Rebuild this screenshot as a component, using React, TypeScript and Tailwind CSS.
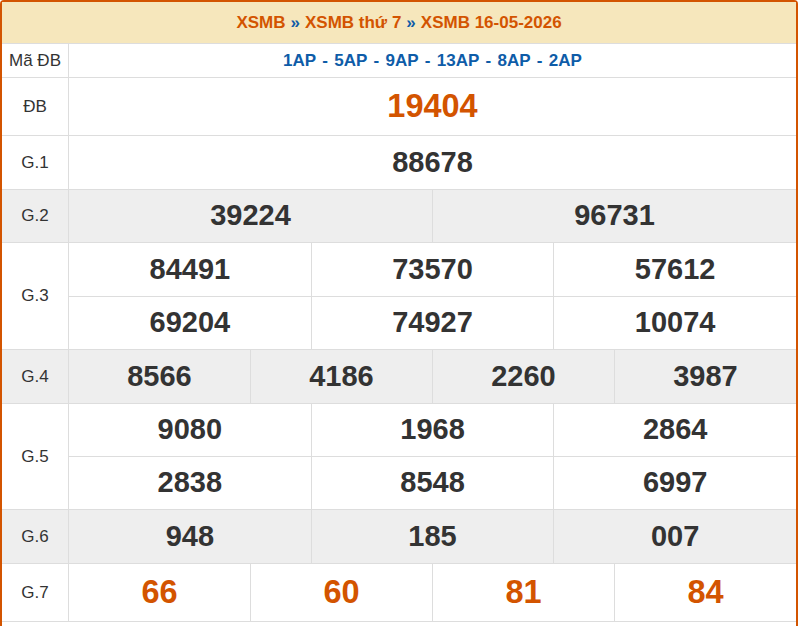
import React from "react";

type Group = {
  label: string;
  rows: string[][];
  heights: number[];
  gray?: boolean;
  orange?: boolean;
  big?: boolean;
};

const groups: Group[] = [
  { label: "ĐB", rows: [["19404"]], heights: [58], orange: true, big: true },
  { label: "G.1", rows: [["88678"]], heights: [54] },
  { label: "G.2", rows: [["39224", "96731"]], heights: [53], gray: true },
  {
    label: "G.3",
    rows: [
      ["84491", "73570", "57612"],
      ["69204", "74927", "10074"],
    ],
    heights: [54, 53],
  },
  { label: "G.4", rows: [["8566", "4186", "2260", "3987"]], heights: [54], gray: true },
  {
    label: "G.5",
    rows: [
      ["9080", "1968", "2864"],
      ["2838", "8548", "6997"],
    ],
    heights: [53, 53],
  },
  { label: "G.6", rows: [["948", "185", "007"]], heights: [54], gray: true },
  { label: "G.7", rows: [["66", "60", "81", "84"]], heights: [58], orange: true, big: true },
];

export default function App() {
  return (
    <div
      className="bg-white w-[800px] h-[626px] overflow-hidden"
      style={{ fontFamily: '"Liberation Sans", Arial, sans-serif' }}
    >
      <div className="w-[798px] border-2 border-b-0 border-[#d35400] rounded-t-[4px] flex flex-col">
        <div className="h-[42px] bg-[#f6e7bc] border-b border-[#dddddd] flex items-center justify-center text-[17px] font-bold text-[#d35400]">
          <span>XSMB</span>
          <span className="text-[#0e5ca8] mx-[5px]">»</span>
          <span>XSMB thứ 7</span>
          <span className="text-[#0e5ca8] mx-[5px]">»</span>
          <span>XSMB 16-05-2026</span>
        </div>
        <div className="flex h-[34px]">
          <div className="w-[67px] border-r border-b border-[#dddddd] flex items-center justify-center text-[17px] text-[#333]">
            Mã ĐB
          </div>
          <div className="flex-1 border-b border-[#dddddd] flex items-center justify-center text-[17px] font-bold text-[#0e5ca8] [word-spacing:1.7px]">
            1AP - 5AP - 9AP - 13AP - 8AP - 2AP
          </div>
        </div>
        {groups.map((g) => (
          <div key={g.label} className={`flex ${g.gray ? "bg-[#eeeeee]" : "bg-white"}`}>
            <div className="w-[67px] border-r border-b border-[#dddddd] flex items-center justify-center text-[17px] text-[#333]">
              {g.label}
            </div>
            <div className="flex-1 flex flex-col">
              {g.rows.map((r, i) => (
                <div
                  key={i}
                  className="flex border-b border-[#dddddd]"
                  style={{ height: g.heights[i] }}
                >
                  {r.map((n, j) => (
                    <div
                      key={j}
                      className={`flex-1 basis-0 flex items-center justify-center font-bold ${
                        j > 0 ? "border-l border-[#dddddd]" : ""
                      } ${g.big ? "text-[32.5px]" : "text-[29px]"} ${
                        g.orange ? "text-[#d35400]" : "text-[#333]"
                      }`}
                    >
                      {n}
                    </div>
                  ))}
                </div>
              ))}
            </div>
          </div>
        ))}
        <div className="h-[20px] bg-white" />
      </div>
    </div>
  );
}
